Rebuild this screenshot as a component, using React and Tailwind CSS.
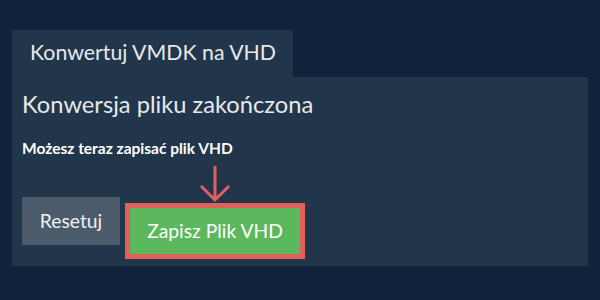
import React from 'react';

function ArrowDown() {
  return (
    <svg width="32" height="38" viewBox="0 0 32 38" className="block">
      <path d="M16 1 L16 35 M2 21 L16 35 L30 21" fill="none" stroke="#e0605c" strokeWidth="3" />
    </svg>
  );
}

export default function App() {
  return (
    <div className="w-[600px] h-[300px] bg-[#10233a] pt-[30px] px-[12px] font-['Lato','Noto_Sans',sans-serif]">
      {/* Tab */}
      <div className="w-[281px] h-[47px] bg-[#22364b] pl-[18px] pt-[7px] text-[21.3px] text-[#e6e9ec]">
        Konwertuj VMDK na VHD
      </div>

      {/* Card */}
      <div className="w-[576px] h-[189px] bg-[#22364b] px-[10px] pt-[12px]">
        <h2 className="text-[23.7px] leading-[30px] text-[#e6e9ec]">Konwersja pliku zakończona</h2>
        <p className="mt-[20px] text-[15.5px] leading-[18px] font-bold text-white">Możesz teraz zapisać plik VHD</p>

        <div className="flex items-start mt-[8px]">
          <div className="mt-[32px] w-[98px] h-[48px] bg-[#4b5b6b] text-[#eef0f2] text-[19.3px] flex items-center justify-center">
            Resetuj
          </div>
          <div className="ml-[5px] flex flex-col items-center">
            <ArrowDown />
            <div className="w-[180px] h-[56px] border-[5px] border-[#e0605c] bg-[#5cb85c] text-white text-[19.3px] flex items-center justify-center">
              Zapisz Plik VHD
            </div>
          </div>
        </div>
      </div>
    </div>
  );
}
